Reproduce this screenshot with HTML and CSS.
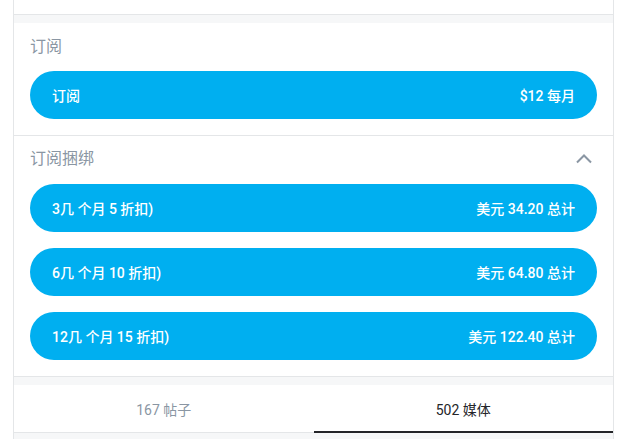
FILE: index.html
```html
<!DOCTYPE html>
<html lang="zh-CN">
<head>
    <meta charset="UTF-8">
    <meta name="viewport" content="width=device-width, initial-scale=1.0">
    <title>订阅</title>
    <link rel="stylesheet" href="styles.css">
</head>
<body>
    <div class="container">
        <div class="card-tail"></div>
        <div class="divider"></div>

        <div class="section">
            <div class="section-title">订阅</div>
            <button class="btn">
                <span>订阅</span>
                <span>$12 每月</span>
            </button>
        </div>

        <div class="section">
            <div class="section-head">
                <div class="section-title">订阅捆绑</div>
                <svg class="chevron" width="24" height="24" viewBox="0 0 24 24">
                    <path d="M5 15.5l7-7 7 7" fill="none" stroke="#8a96a3" stroke-width="2"/>
                </svg>
            </div>
            <div class="bundle-list">
                <button class="btn">
                    <span>3几 个月 5 折扣)</span>
                    <span>美元 34.20 总计</span>
                </button>
                <button class="btn">
                    <span>6几 个月 10 折扣)</span>
                    <span>美元 64.80 总计</span>
                </button>
                <button class="btn">
                    <span>12几 个月 15 折扣)</span>
                    <span>美元 122.40 总计</span>
                </button>
            </div>
        </div>

        <div class="divider"></div>

        <div class="tabs">
            <div class="tab">167 帖子</div>
            <div class="tab active">502 媒体</div>
        </div>
        <div class="divider"></div>
    </div>
</body>
</html>
```

FILE: styles.css
```css
:root {
    --primary-color: #00aff0;
    --muted-color: #8a96a3;
    --border-color: #e4e6e8;
    --band-color: #f6f7f8;
}
body {
    font-family: Roboto, "Noto Sans CJK SC", sans-serif;
    background-color: white;
    margin: 0;
    padding: 0;
}
.container {
    width: 599px;
    margin-left: 13px;
    border-left: 1px solid var(--border-color);
    border-right: 1px solid var(--border-color);
}
.card-tail {
    height: 14px;
    border-bottom: 1px solid var(--border-color);
}
.divider {
    height: 8px;
    background-color: var(--band-color);
}
.section {
    padding: 14px 16px 16px 16px;
    border-bottom: 1px solid var(--border-color);
}
.section + .section {
    padding-top: 13px;
}
.section-title {
    font-size: 16px;
    line-height: 20px;
    color: var(--muted-color);
    margin-bottom: 14px;
}
.section-head {
    display: flex;
    justify-content: space-between;
    align-items: flex-start;
}
.section-head .section-title {
    margin-bottom: 15px;
}
.chevron {
    margin-top: -2px;
    margin-right: 1px;
}
.bundle-list {
    display: flex;
    flex-direction: column;
    gap: 16px;
}
.btn {
    display: flex;
    justify-content: space-between;
    align-items: center;
    width: 100%;
    height: 48px;
    padding: 0 22px;
    border: none;
    border-radius: 24px;
    background-color: var(--primary-color);
    color: white;
    font-family: inherit;
    font-size: 14px;
    font-weight: 500;
    cursor: pointer;
}
.tabs {
    display: flex;
    border-bottom: 1px solid var(--border-color);
}
.tab {
    flex: 1;
    height: 47px;
    display: flex;
    justify-content: center;
    align-items: center;
    font-size: 14px;
    color: var(--muted-color);
    position: relative;
}
.tab.active {
    color: #242529;
}
.tab.active::after {
    content: "";
    position: absolute;
    left: 0;
    right: 0;
    bottom: -1px;
    height: 2px;
    background-color: #242529;
}
```
